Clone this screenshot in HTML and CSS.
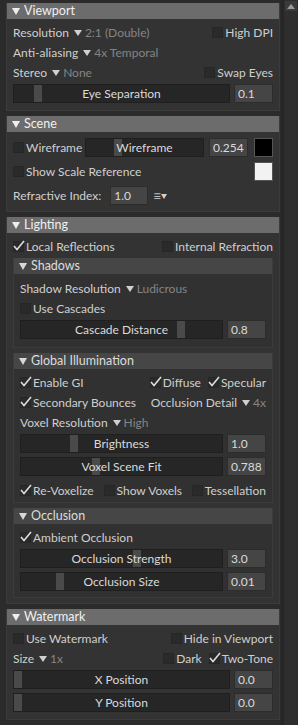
FILE: index.html
```html
<!DOCTYPE html>
<html lang="en">

<head>
    <meta charset="UTF-8">
    <meta name="viewport" content="width=device-width, initial-scale=1.0">
    <title>Render Settings</title>
    <link rel="stylesheet" href="styles.css">
</head>

<body>
    <div class="app">
        <div class="panels">
            <!-- Viewport -->
            <section class="panel">
                <div class="head"><i class="tri"></i>Viewport</div>
                <div class="body">
                    <div class="row">
                        <span class="drop">Resolution<i class="arr"></i><em>2:1 (Double)</em></span>
                        <span class="chk"><span class="box"></span>High DPI</span>
                    </div>
                    <div class="row">
                        <span class="drop">Anti-aliasing<i class="arr"></i><em>4x Temporal</em></span>
                    </div>
                    <div class="row">
                        <span class="drop">Stereo<i class="arr"></i><em>None</em></span>
                        <span class="chk"><span class="box"></span>Swap Eyes</span>
                    </div>
                    <div class="srow">
                        <div class="slider"><span class="thumb" style="left: 20px"></span><span class="stxt">Eye Separation</span></div>
                        <div class="val">0.1</div>
                    </div>
                </div>
            </section>

            <!-- Scene -->
            <section class="panel">
                <div class="head"><i class="tri"></i>Scene</div>
                <div class="body scene">
                    <div class="row wire">
                        <span class="chk"><span class="box"></span>Wireframe</span>
                        <div class="slider"><span class="thumb" style="left: 28px"></span><span class="stxt">Wireframe</span></div>
                        <div class="val">0.254</div>
                        <span class="swatch black"></span>
                    </div>
                    <div class="row tall">
                        <span class="chk"><span class="box"></span>Show Scale Reference</span>
                        <span class="swatch white"></span>
                    </div>
                    <div class="row tall">
                        <span class="field-label">Refractive Index:</span>
                        <span class="field">1.0</span>
                        <span class="menu">&#8801;<i class="arr"></i></span>
                    </div>
                </div>
            </section>

            <!-- Lighting -->
            <section class="panel">
                <div class="head"><i class="tri"></i>Lighting</div>
                <div class="body">
                    <div class="row">
                        <span class="chk"><span class="box on"><svg viewBox="0 0 12 12"><path d="M1 6 L4 9.5 L11 1" /></svg></span>Local Reflections</span>
                        <span class="chk"><span class="box"></span>Internal Refraction</span>
                    </div>

                    <div class="sub">
                        <div class="subhead"><i class="tri"></i>Shadows</div>
                        <div class="subbody shadows">
                            <div class="row">
                                <span class="drop">Shadow Resolution<i class="arr"></i><em>Ludicrous</em></span>
                            </div>
                            <div class="row">
                                <span class="chk"><span class="box"></span>Use Cascades</span>
                            </div>
                            <div class="srow">
                                <div class="slider"><span class="thumb" style="left: 156px"></span><span class="stxt">Cascade Distance</span></div>
                                <div class="val">0.8</div>
                            </div>
                        </div>
                    </div>

                    <div class="sub">
                        <div class="subhead"><i class="tri"></i>Global Illumination</div>
                        <div class="subbody">
                            <div class="row">
                                <span class="chk"><span class="box on"><svg viewBox="0 0 12 12"><path d="M1 6 L4 9.5 L11 1" /></svg></span>Enable GI</span>
                                <span class="group">
                                    <span class="chk"><span class="box on"><svg viewBox="0 0 12 12"><path d="M1 6 L4 9.5 L11 1" /></svg></span>Diffuse</span>
                                    <span class="chk"><span class="box on"><svg viewBox="0 0 12 12"><path d="M1 6 L4 9.5 L11 1" /></svg></span>Specular</span>
                                </span>
                            </div>
                            <div class="row">
                                <span class="chk"><span class="box on"><svg viewBox="0 0 12 12"><path d="M1 6 L4 9.5 L11 1" /></svg></span>Secondary Bounces</span>
                                <span class="drop">Occlusion Detail<i class="arr"></i><em>4x</em></span>
                            </div>
                            <div class="row">
                                <span class="drop">Voxel Resolution<i class="arr"></i><em>High</em></span>
                            </div>
                            <div class="srow">
                                <div class="slider"><span class="thumb" style="left: 49px"></span><span class="stxt">Brightness</span></div>
                                <div class="val">1.0</div>
                            </div>
                            <div class="srow">
                                <div class="slider"><span class="thumb" style="left: 71px"></span><span class="stxt">Voxel Scene Fit</span></div>
                                <div class="val">0.788</div>
                            </div>
                            <div class="row">
                                <span class="chk"><span class="box on"><svg viewBox="0 0 12 12"><path d="M1 6 L4 9.5 L11 1" /></svg></span>Re-Voxelize</span>
                                <span class="chk"><span class="box"></span>Show Voxels</span>
                                <span class="chk"><span class="box"></span>Tessellation</span>
                            </div>
                        </div>
                    </div>

                    <div class="sub">
                        <div class="subhead"><i class="tri"></i>Occlusion</div>
                        <div class="subbody">
                            <div class="row">
                                <span class="chk"><span class="box on"><svg viewBox="0 0 12 12"><path d="M1 6 L4 9.5 L11 1" /></svg></span>Ambient Occlusion</span>
                            </div>
                            <div class="srow">
                                <div class="slider"><span class="thumb" style="left: 112px"></span><span class="stxt">Occlusion Strength</span></div>
                                <div class="val">3.0</div>
                            </div>
                            <div class="srow">
                                <div class="slider"><span class="thumb" style="left: 35px"></span><span class="stxt">Occlusion Size</span></div>
                                <div class="val">0.01</div>
                            </div>
                        </div>
                    </div>
                </div>
            </section>

            <!-- Watermark -->
            <section class="panel">
                <div class="head"><i class="tri"></i>Watermark</div>
                <div class="body">
                    <div class="row">
                        <span class="chk"><span class="box"></span>Use Watermark</span>
                        <span class="chk"><span class="box"></span>Hide in Viewport</span>
                    </div>
                    <div class="row">
                        <span class="drop">Size<i class="arr"></i><em>1x</em></span>
                        <span class="group">
                            <span class="chk"><span class="box"></span>Dark</span>
                            <span class="chk"><span class="box on"><svg viewBox="0 0 12 12"><path d="M1 6 L4 9.5 L11 1" /></svg></span>Two-Tone</span>
                        </span>
                    </div>
                    <div class="srow">
                        <div class="slider"><span class="thumb" style="left: 0px"></span><span class="stxt">X Position</span></div>
                        <div class="val">0.0</div>
                    </div>
                    <div class="srow">
                        <div class="slider"><span class="thumb" style="left: 0px"></span><span class="stxt">Y Position</span></div>
                        <div class="val">0.0</div>
                    </div>
                </div>
            </section>
        </div>

        <div class="scroll">
            <div class="up"><i></i></div>
        </div>
    </div>
</body>

</html>
```

FILE: styles.css
```css
html,
body {
    margin: 0;
    padding: 0;
    height: 100%;
}

body {
    background: #2b2b2b;
    color: #cfcfcf;
    font-family: Lato, "Open Sans", sans-serif;
    font-size: 12px;
}

.app {
    display: flex;
    height: 100%;
}

.panels {
    width: 274px;
    padding: 3px 0 0 6px;
}

/* panels */
.panel {
    background: #333333;
    border: 1px solid #3b3b3b;
    border-top: 0;
    margin-bottom: 5px;
}

.head {
    height: 16px;
    line-height: 16px;
    background: #6c6c6c;
    color: #f0f0f0;
    font-size: 12.5px;
    padding-left: 5px;
    display: flex;
    align-items: center;
}

.tri {
    width: 0;
    height: 0;
    border-left: 4px solid transparent;
    border-right: 4px solid transparent;
    border-top: 7px solid #eeeeee;
    margin-right: 4px;
}

.body {
    padding: 3px 6px 3px;
}

.body.scene {
    padding-bottom: 4px;
}

.sub {
    background: #313131;
    border: 1px solid #3c3c3c;
    border-top: 0;
    margin: 2px 0 5px;
}

.sub:last-child {
    margin-bottom: 2px;
}

.subhead {
    height: 16px;
    line-height: 16px;
    background: #464646;
    color: #dddddd;
    font-size: 12.5px;
    padding-left: 5px;
    display: flex;
    align-items: center;
}

.subhead .tri {
    border-top-color: #d8d8d8;
}

.subbody {
    padding: 3px 6px 2px;
}

.subbody.shadows {
    padding: 4px 6px 4px;
}

/* rows */
.row {
    height: 20px;
    display: flex;
    align-items: center;
    justify-content: space-between;
    white-space: nowrap;
}

.row.tall {
    height: 24px;
}

.group {
    display: flex;
    gap: 7px;
}

.drop em {
    font-style: normal;
    color: #858585;
}

.arr {
    display: inline-block;
    width: 0;
    height: 0;
    border-left: 4px solid transparent;
    border-right: 4px solid transparent;
    border-top: 6px solid #d0d0d0;
    margin: 0 3px 1px 5px;
    vertical-align: middle;
}

/* checkbox */
.chk {
    display: inline-flex;
    align-items: center;
}

.box {
    position: relative;
    width: 9px;
    height: 9px;
    background: #2a2a2a;
    border: 1px solid #262626;
    margin-right: 2px;
}

.box svg {
    position: absolute;
    left: -1px;
    top: -2px;
    width: 12px;
    height: 12px;
    fill: none;
    stroke: #dddddd;
    stroke-width: 1.6;
}

/* sliders */
.srow {
    display: flex;
    gap: 4px;
    margin: 2px 0 4px;
}

.slider {
    position: relative;
    flex: 1;
    height: 17px;
    background: #262626;
    border: 1px solid #1f1f1f;
    display: flex;
    align-items: center;
    justify-content: center;
    overflow: hidden;
}

.thumb {
    position: absolute;
    top: 0;
    bottom: 0;
    width: 8px;
    background: #4a4a4a;
}

.stxt {
    position: relative;
    color: #dadada;
}

.val {
    width: 34px;
    height: 17px;
    line-height: 17px;
    background: #454545;
    border: 1px solid #2c2c2c;
    padding-left: 3px;
    color: #dadada;
}

/* scene widgets */
.wire {
    height: 24px;
    justify-content: flex-start;
}

.wire .slider {
    flex: none;
    width: 117px;
    margin-left: auto;
}

.wire .val {
    margin-left: 5px;
}

.swatch {
    width: 17px;
    height: 17px;
    border: 1px solid #555555;
}

.wire .swatch {
    margin-left: 6px;
}

.swatch.black {
    background: #000000;
}

.swatch.white {
    background: #f2f2f2;
}

.field-label {
    margin-right: 9px;
}

.field {
    width: 33px;
    height: 17px;
    line-height: 17px;
    background: #454545;
    border: 1px solid #2c2c2c;
    padding-left: 3px;
    color: #dadada;
}

.menu {
    margin-left: 5px;
    margin-right: auto;
    color: #bbbbbb;
    font-size: 14px;
}

.menu .arr {
    margin-left: 0;
    border-top-width: 5px;
    border-left-width: 3px;
    border-right-width: 3px;
}

/* scrollbar */
.scroll {
    margin-left: 1px;
    width: 13px;
    border-left: 3px solid #262626;
    background: #2e2e2e;
}

.up {
    height: 10px;
    margin: 1px 0 0 1px;
    background: #3b3b3b;
    display: flex;
    align-items: center;
    justify-content: center;
}

.up i {
    width: 0;
    height: 0;
    border-left: 4px solid transparent;
    border-right: 4px solid transparent;
    border-bottom: 5px solid #9a9a9a;
}
```
